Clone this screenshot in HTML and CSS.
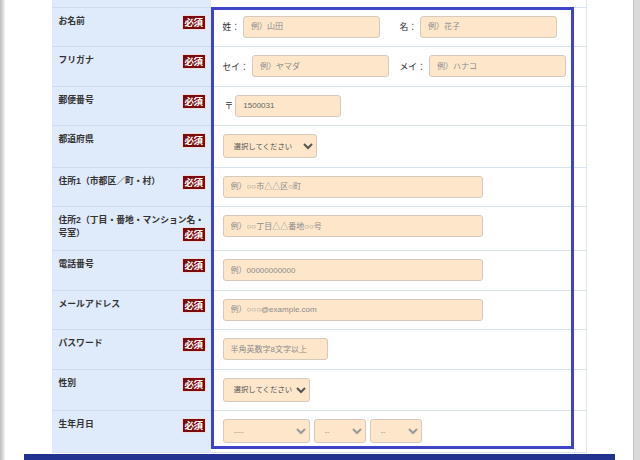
FILE: index.html
```html
<!DOCTYPE html>
<html lang="ja">
<head>
<meta charset="utf-8">
<title>会員登録</title>
<link rel="stylesheet" href="styles.css">
</head>
<body>
<div class="shade-left"></div>
<main class="page">
  <div class="container">
    <div class="form-area">
      <table class="form-table">
        <tr class="filler"><th></th><td></td></tr>
        <tr>
          <th><span class="th-text">お名前</span><span class="req">必須</span></th>
          <td>
            <div class="pair">
              <div class="grp"><span class="lbl">姓：</span><input class="in w137" placeholder="例）山田"></div>
              <div class="grp"><span class="lbl">名：</span><input class="in w137" placeholder="例）花子"></div>
            </div>
          </td>
        </tr>
        <tr>
          <th><span class="th-text">フリガナ</span><span class="req">必須</span></th>
          <td>
            <div class="pair">
              <div class="grp"><span class="lbl">セイ：</span><input class="in w137" placeholder="例）ヤマダ"></div>
              <div class="grp"><span class="lbl">メイ：</span><input class="in w137" placeholder="例）ハナコ"></div>
            </div>
          </td>
        </tr>
        <tr>
          <th><span class="th-text">郵便番号</span><span class="req">必須</span></th>
          <td><div class="grp"><span class="lbl zip">〒</span><input class="in w106 val" value="1500031"></div></td>
        </tr>
        <tr>
          <th><span class="th-text">都道府県</span><span class="req">必須</span></th>
          <td><select class="sel w94"><option>選択してください</option></select></td>
        </tr>
        <tr>
          <th><span class="th-text">住所1（市都区／町・村）</span><span class="req">必須</span></th>
          <td><input class="in w260" placeholder="例）○○市△△区○町"></td>
        </tr>
        <tr>
          <th><span class="th-text">住所2（丁目・番地・マンション名・</span><span class="th-text">号室）</span><span class="req">必須</span></th>
          <td><input class="in w260" placeholder="例）○○丁目△△番地○○号"></td>
        </tr>
        <tr>
          <th><span class="th-text">電話番号</span><span class="req">必須</span></th>
          <td><input class="in w260" placeholder="例）00000000000"></td>
        </tr>
        <tr>
          <th><span class="th-text">メールアドレス</span><span class="req">必須</span></th>
          <td><input class="in w260" placeholder="例）○○○@example.com"></td>
        </tr>
        <tr>
          <th><span class="th-text">パスワード</span><span class="req">必須</span></th>
          <td><input class="in w105" placeholder="半角英数字8文字以上"></td>
        </tr>
        <tr>
          <th><span class="th-text">性別</span><span class="req">必須</span></th>
          <td><select class="sel w87"><option>選択してください</option></select></td>
        </tr>
        <tr>
          <th><span class="th-text">生年月日</span><span class="req">必須</span></th>
          <td>
            <div class="dates">
              <select class="sel w87 ph"><option>----</option></select>
              <select class="sel w52 ph"><option>--</option></select>
              <select class="sel w52 ph"><option>--</option></select>
            </div>
          </td>
        </tr>
      </table>
      <div class="highlight"></div>
    </div>
    <div class="footer-bar"></div>
  </div>
</main>
<div class="shade-right"></div>
</body>
</html>
```

FILE: styles.css
```css
* { box-sizing: border-box; }

html, body {
  margin: 0;
  height: 460px;
  overflow: hidden;
  background: #ffffff;
}

body {
  display: flex;
  font-family: "Liberation Sans", "Noto Sans CJK JP", sans-serif;
  color: #333;
}

.shade-left {
  width: 5px;
  flex: none;
  background: linear-gradient(to right, #bcbcbc, #e6e6e6 80%, #f6f6f6);
}

.shade-right {
  width: 7px;
  flex: none;
  background: #dadada;
  border-left: 1px solid #c2c2c2;
}

.page {
  flex: 1;
  min-width: 0;
}

.container {
  width: 591px;
  margin: 0 auto;
}

.form-area {
  position: relative;
  margin: 0 28px;
}

.form-table {
  width: 535px;
  border-collapse: collapse;
  border-right: 1px solid #dce6f3;
}

.form-table th,
.form-table td {
  border-top: 1px solid #d9e3f0;
  vertical-align: top;
}

.form-table tr:last-child th,
.form-table tr:last-child td {
  border-bottom: 1px solid #d9e3f0;
}

.form-table th {
  width: 159px;
  background: #dfeafb;
  border-top-color: #cedcef;
  text-align: left;
  font-size: 8.8px;
  font-weight: bold;
  line-height: 13px;
  padding: 7px 6px 9px 7px;
  color: #333;
}

.th-text {
  display: inline-block;
}

.form-table td {
  background: #fff;
  padding: 8px 9px 8.5px 12px;
}

.form-table .filler th,
.form-table .filler td {
  height: 7px;
  padding: 0;
  border-top: none;
}

.req {
  float: right;
  margin-top: 1px;
  width: 22px;
  height: 13px;
  background: #7c0a0a;
  color: #fff;
  font-family: "Noto Sans CJK JP", sans-serif;
  font-size: 9.5px;
  font-weight: bold;
  line-height: 13px;
  text-align: center;
  letter-spacing: -0.5px;
  box-shadow: 0 0 0 1px #efdcdc;
}

.pair {
  display: grid;
  grid-template-columns: 1fr 1fr;
}

.grp {
  display: flex;
  align-items: center;
}

.lbl {
  font-size: 8.8px;
  color: #333;
  margin-right: 3px;
  white-space: nowrap;
}

.lbl.zip {
  margin-left: 2px;
  margin-right: 2px;
}

.in {
  display: block;
  height: 22px;
  padding: 0 7px;
  background: #fde6ca;
  border: 1px solid #d6cabc;
  border-radius: 3px;
  font-family: "Liberation Sans", "Noto Sans CJK JP", sans-serif;
  font-size: 8px;
  color: #666;
  outline: none;
}

.in::placeholder {
  color: #8c8c8c;
}

.sel {
  display: block;
  height: 24px;
  padding: 0 1px 0 6px;
  background-color: #fde6ca;
  border: 1px solid #d6cabc;
  border-radius: 3px;
  font-family: "Liberation Sans", "Noto Sans CJK JP", sans-serif;
  font-size: 7.4px;
  color: #555;
}

.sel.ph { color: #999; }

.dates {
  display: flex;
  gap: 4px;
}

.w137 { width: 137px; }
.w106 { width: 106px; }
.w105 { width: 105px; }
.w260 { width: 260px; }
.w94 { width: 94px; }
.w87 { width: 87px; }
.w52 { width: 52px; }

.highlight {
  position: absolute;
  left: 159px;
  top: 7px;
  width: 363px;
  height: 442px;
  border: 3px solid #3d45c6;
  pointer-events: none;
}

.footer-bar {
  margin-top: 1px;
  height: 7px;
  background: #21338f;
}
```
